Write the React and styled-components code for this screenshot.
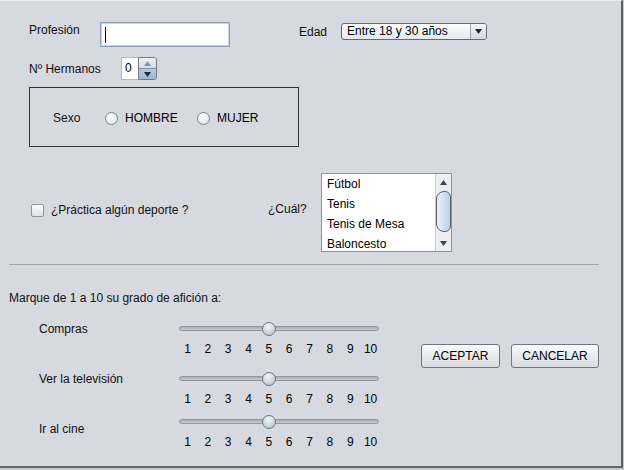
import React from "react";
import styled, { createGlobalStyle } from "styled-components";

const Global = createGlobalStyle`
  html, body { margin: 0; padding: 0; background: #c4c7cc; }
  body { font-family: "Liberation Sans", Arial, sans-serif; }
  * { box-sizing: border-box; }
`;

const Screen = styled.div`
  width: 624px;
  height: 470px;
  overflow: hidden;
  background: #c4c7cc;
`;

const Window = styled.div`
  width: 623px;
  height: 468px;
  background: #d6d9df;
  border-top: 1px solid #e9ebee;
  border-right: 2px solid #5b5e63;
  border-bottom: 2px solid #62656a;
  padding-top: 21px;
  font-size: 12px;
  color: #111;
`;

const Row = styled.div`
  display: flex;
  align-items: ${(p) => p.$align || "flex-start"};
  padding-left: ${(p) => p.$left || 0}px;
  margin-top: ${(p) => p.$top || 0}px;
  height: ${(p) => (p.$h ? `${p.$h}px` : "auto")};
`;

const Label = styled.span`
  display: block;
  flex: none;
  width: ${(p) => (p.$w ? `${p.$w}px` : "auto")};
  margin-top: ${(p) => p.$mt || 0}px;
  margin-left: ${(p) => p.$ml || 0}px;
  line-height: 14px;
  font-size: 12px;
  white-space: nowrap;
`;

const TextField = styled.div`
  flex: none;
  width: 130px;
  height: 25px;
  background: #fff;
  border: 1px solid #8aa0ba;
  box-shadow: inset 0 0 0 1px #c3d5e9;
  padding: 4px 0 0 4px;
`;

const Caret = styled.span`
  display: block;
  width: 1px;
  height: 16px;
  background: #000;
`;

const Combo = styled.div`
  flex: none;
  display: flex;
  width: 146px;
  height: 17px;
  margin-top: 1px;
  border: 1px solid #5f6b78;
  border-radius: 3px;
  background: linear-gradient(#fdfdfd, #e5e8ed);
  overflow: hidden;
`;

const ComboText = styled.span`
  flex: 1;
  padding-left: 5px;
  line-height: 15px;
  font-size: 12px;
  color: #000;
`;

const ComboArrow = styled.span`
  flex: none;
  width: 16px;
  display: flex;
  align-items: center;
  justify-content: center;
  border-left: 1px solid #9aa4b0;
  background: linear-gradient(#f4f6f9, #d3d9e1);
`;

const Spinner = styled.div`
  flex: none;
  display: flex;
  width: 36px;
  height: 23px;
`;

const SpinField = styled.div`
  width: 17px;
  background: #fff;
  border: 1px solid #b4bac2;
  border-right: none;
  padding-left: 3px;
  line-height: 21px;
  font-size: 12px;
  color: #000;
`;

const SpinButtons = styled.div`
  width: 19px;
  display: flex;
  flex-direction: column;
  border: 1px solid #6e7c8c;
  border-radius: 0 3px 3px 0;
  overflow: hidden;
`;

const SpinHalf = styled.div`
  flex: 1;
  display: flex;
  align-items: center;
  justify-content: center;
  background: ${(p) =>
    p.$down
      ? "linear-gradient(#b7c9dc, #9fb5cc)"
      : "linear-gradient(#eef2f7, #d3dde8)"};
  border-top: ${(p) => (p.$down ? "1px solid #7d8ea1" : "none")};
`;

const GroupBox = styled.div`
  display: flex;
  align-items: center;
  width: 270px;
  height: 60px;
  margin: 7px 0 0 29px;
  border: 1px solid #333;
  padding: 2px 0 0 23px;
`;

const Option = styled.div`
  flex: none;
  display: flex;
  align-items: center;
  gap: 7px;
  width: ${(p) => (p.$w ? `${p.$w}px` : "auto")};
  margin-top: ${(p) => p.$mt || 0}px;
  height: 14px;
  font-size: 12px;
  white-space: nowrap;
  color: ${(p) => p.$color || "#000"};
`;

const Radio = styled.span`
  flex: none;
  width: 13px;
  height: 13px;
  border-radius: 50%;
  border: 1px solid #7c8591;
  background: radial-gradient(circle at 40% 35%, #ffffff, #e9ecf0 60%, #d3d8de);
`;

const Checkbox = styled.span`
  flex: none;
  width: 13px;
  height: 13px;
  border-radius: 2px;
  border: 1px solid #8a939e;
  background: linear-gradient(#fbfcfd, #dde2e8);
`;

const List = styled.div`
  flex: none;
  display: flex;
  width: 131px;
  height: 79px;
  border: 1px solid #8e949b;
  background: #fff;
`;

const ListItems = styled.div`
  flex: 1;
  overflow: hidden;
`;

const ListItem = styled.div`
  height: 20px;
  line-height: 20px;
  padding-left: 5px;
  font-size: 12px;
  color: #000;
  white-space: nowrap;
`;

const ScrollBar = styled.div`
  flex: none;
  width: 16px;
  display: flex;
  flex-direction: column;
  background: #eceef1;
  border-left: 1px solid #c9cdd2;
`;

const ScrollArrow = styled.div`
  flex: none;
  height: 16px;
  display: flex;
  align-items: center;
  justify-content: center;
`;

const ScrollTrack = styled.div`
  flex: 1;
`;

const ScrollThumb = styled.div`
  margin-top: 1px;
  height: 41px;
  border: 1px solid #55606d;
  border-radius: 8px 6px 6px 8px;
  background: linear-gradient(90deg, #eaf0f7, #bcd0e4);
`;

const Separator = styled.div`
  width: 590px;
  height: 1px;
  margin: 12px 0 0 9px;
  background: #a2a5ab;
`;

const Bottom = styled.div`
  display: flex;
  margin-top: 17px;
`;

const SliderColumn = styled.div`
  flex: none;
  width: 379px;
  display: flex;
  flex-direction: column;
`;

const SliderRow = styled.div`
  display: flex;
  align-items: flex-start;
  padding-left: 39px;
  margin-top: ${(p) => p.$top || 0}px;
`;

const Slider = styled.div`
  flex: none;
  width: 200px;
`;

const TrackArea = styled.div`
  position: relative;
  height: 14px;
  padding-top: 4px;
`;

const Track = styled.div`
  height: 5px;
  border-radius: 3px;
  border: 1px solid #9196a0;
  background: linear-gradient(#a5aab2, #c9cdd3);
`;

const Thumb = styled.span`
  position: absolute;
  top: 0;
  width: 14px;
  height: 14px;
  border-radius: 50%;
  border: 1px solid #6b7888;
  background: radial-gradient(circle at 45% 30%, #f4f7fa, #c9d3de 60%, #a9b6c4);
`;

const Scale = styled.div`
  display: grid;
  grid-template-columns: repeat(10, 20.35px);
  margin: 6px 0 0 -1.7px;
  line-height: 14px;
  font-size: 12px;
  color: #000;
  text-align: center;
`;

const Buttons = styled.div`
  display: flex;
  gap: 11px;
  margin: 22px 0 0 42px;
`;

const Button = styled.button`
  flex: none;
  width: ${(p) => p.$w}px;
  height: 24px;
  padding: 0;
  border: 1px solid #6f767f;
  border-radius: 3px;
  background: linear-gradient(#fbfbfc, #e7e9ec 55%, #d9dce1);
  font-family: "Liberation Sans", Arial, sans-serif;
  font-size: 12px;
  color: #000;
`;

const Tri = ({ down, color = "#222" }) => (
  <svg width="7" height="5" viewBox="0 0 7 5">
    {down ? (
      <polygon points="0,0 7,0 3.5,5" fill={color} />
    ) : (
      <polygon points="3.5,0 7,5 0,5" fill={color} />
    )}
  </svg>
);

const hobbies = [
  { label: "Compras", top: 0, mt: 0, value: 5 },
  { label: "Ver la televisión", top: 16, mt: 0, value: 5 },
  { label: "Ir al cine", top: 9, mt: 7, value: 5 },
];

const tickLeft = (v) => 8.5 + (v - 1) * 20.35 - 7;

export default function App() {
  return (
    <Screen>
      <Global />
      <Window>
        <Row $left={29} $h={25}>
          <Label $w={71} $mt={1}>Profesión</Label>
          <TextField>
            <Caret />
          </TextField>
          <Label $w={42} $ml={69} $mt={3}>Edad</Label>
          <Combo>
            <ComboText>Entre 18 y 30 años</ComboText>
            <ComboArrow>
              <Tri down color="#1d2530" />
            </ComboArrow>
          </Combo>
        </Row>

        <Row $left={29} $top={10} $h={23} $align="center">
          <Label $w={92}>Nº Hermanos</Label>
          <Spinner>
            <SpinField>0</SpinField>
            <SpinButtons>
              <SpinHalf>
                <Tri color="#8a96a4" />
              </SpinHalf>
              <SpinHalf $down>
                <Tri down color="#1d2a38" />
              </SpinHalf>
            </SpinButtons>
          </Spinner>
        </Row>

        <GroupBox>
          <Label $w={52}>Sexo</Label>
          <Option $w={92}>
            <Radio />
            HOMBRE
          </Option>
          <Option>
            <Radio />
            MUJER
          </Option>
        </GroupBox>

        <Row $left={31} $top={26} $h={79}>
          <Option $w={237} $mt={30} $color="#111">
            <Checkbox />
            ¿Práctica algún deporte ?
          </Option>
          <Label $w={53} $mt={29}>¿Cuál?</Label>
          <List>
            <ListItems>
              <ListItem>Fútbol</ListItem>
              <ListItem>Tenis</ListItem>
              <ListItem>Tenis de Mesa</ListItem>
              <ListItem>Baloncesto</ListItem>
            </ListItems>
            <ScrollBar>
              <ScrollArrow>
                <Tri color="#3b4450" />
              </ScrollArrow>
              <ScrollTrack>
                <ScrollThumb />
              </ScrollTrack>
              <ScrollArrow>
                <Tri down color="#3b4450" />
              </ScrollArrow>
            </ScrollBar>
          </List>
        </Row>

        <Separator />

        <Label $ml={9} $mt={26}>Marque de 1 a 10 su grado de afición a:</Label>

        <Bottom>
          <SliderColumn>
            {hobbies.map((h) => (
              <SliderRow key={h.label} $top={h.top}>
                <Label $w={140} $mt={h.mt}>{h.label}</Label>
                <Slider>
                  <TrackArea>
                    <Track />
                    <Thumb style={{ left: `${tickLeft(h.value)}px` }} />
                  </TrackArea>
                  <Scale>
                    {[1, 2, 3, 4, 5, 6, 7, 8, 9, 10].map((n) => (
                      <span key={n}>{n}</span>
                    ))}
                  </Scale>
                </Slider>
              </SliderRow>
            ))}
          </SliderColumn>
          <Buttons>
            <Button $w={79}>ACEPTAR</Button>
            <Button $w={88}>CANCELAR</Button>
          </Buttons>
        </Bottom>
      </Window>
    </Screen>
  );
}
